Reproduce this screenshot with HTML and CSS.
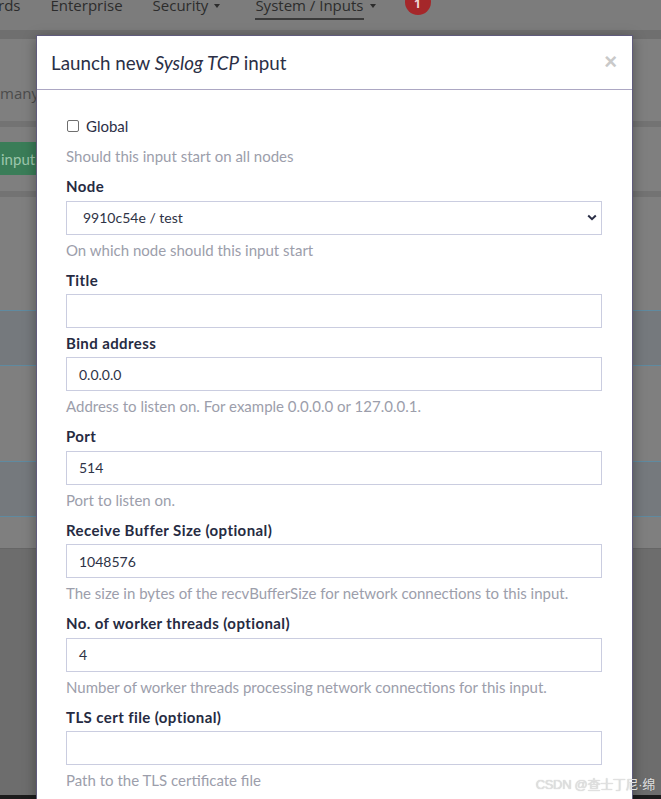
FILE: index.html
```html
<!DOCTYPE html>
<html lang="en">
<head>
<meta charset="utf-8">
<title>Launch new Syslog TCP input</title>
<link rel="stylesheet" href="styles.css">
</head>
<body>
<div class="screen">
  <div class="page">
    <nav class="topnav">
      <span class="nav-item first">rds</span>
      <span class="nav-item">Enterprise</span>
      <span class="nav-item">Security<span class="caret"></span></span>
      <span class="nav-item"><span class="active">System / Inputs</span><span class="caret"></span></span>
      <span class="badge">1</span>
    </nav>
    <div class="band band-nav"></div>
    <div class="block block-intro"><span class="faded">many</span></div>
    <div class="band"></div>
    <div class="block block-actions"><span class="btn-success">input</span></div>
    <div class="band"></div>
    <div class="block block-gap1"></div>
    <div class="row-info"></div>
    <div class="block block-gap2"></div>
    <div class="row-info"></div>
    <div class="block block-gap3"></div>
    <div class="block block-dark"></div>
  </div>
  <div class="bottom-strip"></div>

  <div class="modal">
    <div class="modal-header">
      <h4 class="modal-title">Launch new <em>Syslog TCP</em> input</h4>
      <span class="close">&times;</span>
    </div>
    <div class="modal-body">
      <div class="checkbox-row">
        <span class="checkbox"></span>
        <span class="checkbox-label">Global</span>
      </div>
      <p class="help help-global">Should this input start on all nodes</p>

      <div class="form-group">
        <label class="control-label">Node</label>
        <div class="select">
          <span>9910c54e / test</span>
          <svg class="chevron" width="10" height="7" viewBox="0 0 10 7"><path d="M1.2 1.5 L5 5.2 L8.8 1.5" fill="none" stroke="#2a2e45" stroke-width="2"/></svg>
        </div>
        <p class="help">On which node should this input start</p>
      </div>

      <div class="form-group">
        <label class="control-label">Title</label>
        <div class="input"></div>
      </div>

      <div class="form-group">
        <label class="control-label">Bind address</label>
        <div class="input">0.0.0.0</div>
        <p class="help">Address to listen on. For example 0.0.0.0 or 127.0.0.1.</p>
      </div>

      <div class="form-group">
        <label class="control-label">Port</label>
        <div class="input">514</div>
        <p class="help">Port to listen on.</p>
      </div>

      <div class="form-group">
        <label class="control-label">Receive Buffer Size (optional)</label>
        <div class="input">1048576</div>
        <p class="help">The size in bytes of the recvBufferSize for network connections to this input.</p>
      </div>

      <div class="form-group">
        <label class="control-label">No. of worker threads (optional)</label>
        <div class="input">4</div>
        <p class="help">Number of worker threads processing network connections for this input.</p>
      </div>

      <div class="form-group">
        <label class="control-label">TLS cert file (optional)</label>
        <div class="input"></div>
        <p class="help">Path to the TLS certificate file</p>
      </div>
    </div>
  </div>

  <div class="watermark">CSDN @查士丁尼·绵</div>
</div>
</body>
</html>
```

FILE: styles.css
```css
* { box-sizing: border-box; }
html, body { margin: 0; padding: 0; }
body {
  width: 661px;
  height: 799px;
  overflow: hidden;
  font-family: "Lato", "Noto Sans", sans-serif;
  background: #7f7f7f;
}
.screen {
  position: relative;
  width: 661px;
  height: 799px;
  display: flex;
  flex-direction: column;
  overflow: hidden;
}
.page {
  flex: 1;
  display: flex;
  flex-direction: column;
  background: #7f7f7f;
}
.bottom-strip { height: 4px; background: #1c1c1c; flex: none; }

/* background navbar */
.topnav {
  height: 30px;
  flex: none;
  background: #7c7c7c;
  display: flex;
  align-items: flex-start;
  gap: 30px;
  font-family: "Open Sans", "Liberation Sans", sans-serif;
  font-size: 15px;
  color: #2c2c2c;
  line-height: 14px;
  padding-top: 0;
}
.nav-item { white-space: nowrap; display: flex; align-items: flex-start; margin-top: -2px; }
.nav-item.first { margin-left: -2px; }
.active { border-bottom: 2px solid #3a3a3a; padding-bottom: 6px; }
.caret {
  display: inline-block;
  width: 0; height: 0;
  margin: 6px 5px 0 6px;
  border-left: 3.5px solid transparent;
  border-right: 3.5px solid transparent;
  border-top: 4px solid #2c2c2c;
}
.badge {
  width: 26px; height: 26px;
  margin-top: -11px;
  margin-left: -6px;
  border-radius: 50%;
  background: #a5272a;
  color: #f0d6d6;
  font-size: 12px;
  font-weight: bold;
  display: flex;
  align-items: flex-end;
  justify-content: center;
  padding-bottom: 5px;
  line-height: 12px;
}
.band { height: 6px; background: #737373; flex: none; }
.band-nav { height: 9px; background: #6f6f6f; }
.block { flex: none; }
.block-intro { height: 82px; display: flex; align-items: flex-start; padding-top: 45px; }
.faded { color: #4c4c4c; font-size: 15px; line-height: 18px; font-family: "Open Sans", sans-serif; }
.block-actions { height: 64px; padding-top: 15px; }
.btn-success {
  display: flex;
  align-items: center;
  width: 38px;
  height: 33px;
  background: #3a7d58;
  color: #9cc7ac;
  font-size: 15px;
  padding-left: 1px;
}
.block-gap1 { height: 113px; }
.row-info {
  height: 56px;
  background: #75797d;
  border-top: 1px solid #5f8aa0;
  border-bottom: 1px solid #5f8aa0;
  flex: none;
}
.block-gap2 { height: 95px; }
.block-gap3 { height: 31px; }
.block-dark { flex: 1; background: #6d6d6d; border-top: 1px solid #666; }

/* modal */
.modal {
  position: absolute;
  left: 36px;
  top: 35px;
  width: 597px;
  height: 800px;
  background: #fff;
  border: 1px solid #5f5b7c;
  box-shadow: 0 3px 12px rgba(0,0,0,0.35);
}
.modal-header {
  height: 54px;
  border-bottom: 1px solid #aca7c3;
  display: flex;
  align-items: center;
  justify-content: space-between;
  padding: 0 15px 0 14px;
}
.modal-title {
  margin: 0;
  font-size: 18.8px;
  font-weight: normal;
  color: #2b2f46;
}
.modal-title em { font-style: italic; }
.close {
  font-size: 22px;
  font-weight: bold;
  color: #c9c9c9;
  line-height: 1;
  font-family: "Liberation Sans", sans-serif;
  margin-top: -2px;
}
.modal-body {
  padding: 26px 30px 0 29px;
  font-size: 15px;
  color: #2b2f46;
}
.checkbox-row {
  display: flex;
  align-items: center;
  height: 20px;
  gap: 7px;
  padding-left: 1px;
}
.checkbox {
  width: 12px; height: 12px;
  border: 1px solid #6f6f6f;
  border-radius: 2px;
  background: #fff;
}
.checkbox-label { line-height: 20px; color: #2b2f46; }
.help {
  margin: 5px 0 5.5px;
  line-height: 20px;
  color: #9c9eab;
}
.help-global { margin: 10px 0 10px; }
.form-group {
  display: flex;
  flex-direction: column;
  margin-bottom: 4.5px;
}
.control-label {
  display: block;
  font-weight: bold;
  line-height: 20px;
  margin-bottom: 4.5px;
  letter-spacing: 0.4px;
  color: #262b42;
}
.input, .select {
  height: 34px;
  border: 1px solid #cacde0;
  display: flex;
  align-items: center;
  padding: 0 12px;
  font-size: 14px;
  color: #2e3346;
  background: #fff;
}
.select { padding: 0 4px 0 16px; justify-content: space-between; }

.watermark {
  position: absolute;
  right: 6px;
  bottom: 6px;
  font-family: "Liberation Sans", "Noto Sans CJK SC", sans-serif;
  font-size: 13px;
  color: #e0e0e0;
  text-shadow: 0 0 1px rgba(0,0,0,0.25);
  letter-spacing: -0.3px;
}
```
